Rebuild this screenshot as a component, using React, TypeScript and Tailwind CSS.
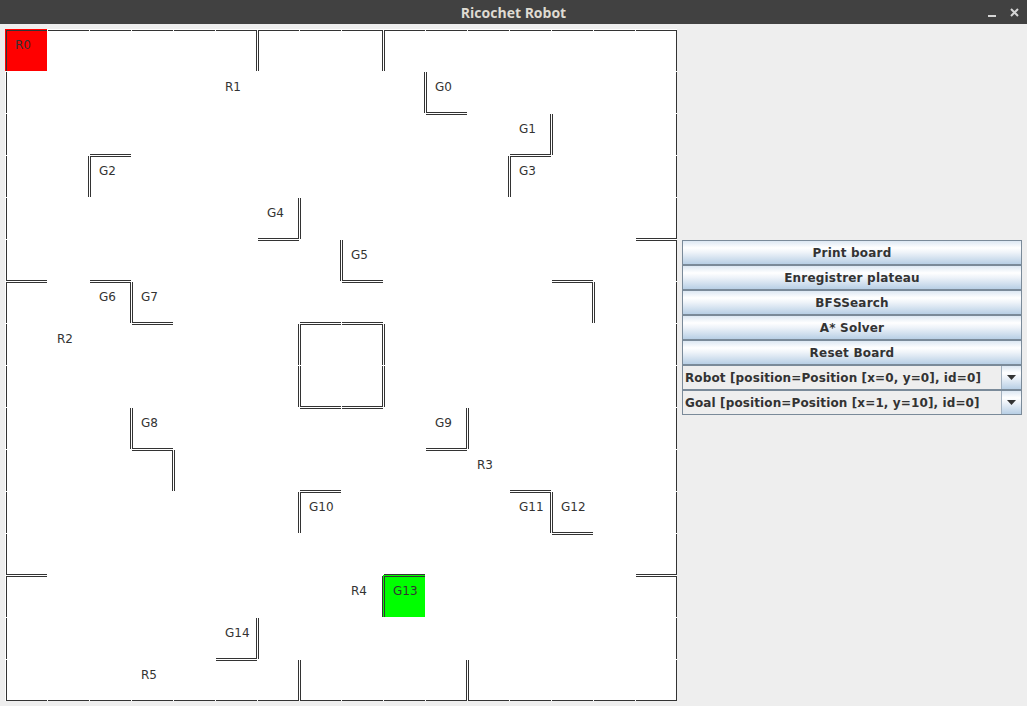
import React from "react";

type Side = "N" | "S" | "E" | "W";

const SIZE = 16;

// one entry per wall; the neighbouring cell gets the opposite side too
const WALLS: [number, number, Side][] = [
  [5, 0, "E"],
  [8, 0, "E"],
  [10, 1, "W"],
  [10, 1, "S"],
  [12, 2, "E"],
  [12, 2, "S"],
  [12, 3, "W"],
  [2, 3, "N"],
  [2, 3, "W"],
  [6, 4, "E"],
  [6, 4, "S"],
  [15, 4, "S"],
  [8, 5, "W"],
  [8, 5, "S"],
  [0, 5, "S"],
  [2, 6, "N"],
  [2, 6, "E"],
  [3, 6, "S"],
  [13, 6, "N"],
  [13, 6, "E"],
  [7, 7, "N"],
  [7, 7, "W"],
  [8, 7, "N"],
  [8, 7, "E"],
  [7, 8, "W"],
  [7, 8, "S"],
  [8, 8, "E"],
  [8, 8, "S"],
  [3, 9, "W"],
  [3, 9, "S"],
  [3, 10, "E"],
  [10, 9, "E"],
  [10, 9, "S"],
  [7, 11, "N"],
  [7, 11, "W"],
  [12, 11, "N"],
  [12, 11, "E"],
  [13, 11, "S"],
  [0, 12, "S"],
  [15, 12, "S"],
  [9, 13, "N"],
  [9, 13, "W"],
  [5, 14, "E"],
  [5, 14, "S"],
  [6, 15, "E"],
  [10, 15, "E"],
];

const LABELS: [number, number, string][] = [
  [0, 0, "R0"],
  [5, 1, "R1"],
  [10, 1, "G0"],
  [12, 2, "G1"],
  [2, 3, "G2"],
  [12, 3, "G3"],
  [6, 4, "G4"],
  [8, 5, "G5"],
  [2, 6, "G6"],
  [3, 6, "G7"],
  [1, 7, "R2"],
  [3, 9, "G8"],
  [10, 9, "G9"],
  [11, 10, "R3"],
  [7, 11, "G10"],
  [12, 11, "G11"],
  [13, 11, "G12"],
  [8, 13, "R4"],
  [9, 13, "G13"],
  [5, 14, "G14"],
  [3, 15, "R5"],
];

const FILLS: Record<string, string> = {
  "0,0": "bg-[#ff0000]",
  "9,13": "bg-[#00ff00]",
};

const opposite: Record<Side, [number, number, Side]> = {
  N: [0, -1, "S"],
  S: [0, 1, "N"],
  E: [1, 0, "W"],
  W: [-1, 0, "E"],
};

function buildWalls() {
  const map: Record<string, Set<Side>> = {};
  const add = (c: number, r: number, s: Side) => {
    if (c < 0 || r < 0 || c >= SIZE || r >= SIZE) return;
    const k = `${c},${r}`;
    if (!map[k]) map[k] = new Set();
    map[k].add(s);
  };
  for (let i = 0; i < SIZE; i++) {
    add(i, 0, "N");
    add(i, SIZE - 1, "S");
    add(0, i, "W");
    add(SIZE - 1, i, "E");
  }
  for (const [c, r, s] of WALLS) {
    add(c, r, s);
    const [dc, dr, o] = opposite[s];
    add(c + dc, r + dr, o);
  }
  return map;
}

const wallMap = buildWalls();
const labelMap: Record<string, string> = {};
for (const [c, r, t] of LABELS) labelMap[`${c},${r}`] = t;

function Cell({ c, r }: { c: number; r: number }) {
  const k = `${c},${r}`;
  const sides = wallMap[k] ?? new Set<Side>();
  const label = labelMap[k];
  return (
    <div className={`relative w-[42px] h-[42px] ${FILLS[k] ?? ""}`}>
      {label && (
        <span className="absolute left-[10px] top-[9px] text-[12px] leading-[14px] text-[#333333]">
          {label}
        </span>
      )}
      <div
        className={[
          "absolute left-px top-px w-[41px] h-[41px] border-[#333333]",
          sides.has("N") ? "border-t" : "",
          sides.has("S") ? "border-b" : "",
          sides.has("W") ? "border-l" : "",
          sides.has("E") ? "border-r" : "",
        ].join(" ")}
      />
    </div>
  );
}

function Board() {
  const cells = [];
  for (let r = 0; r < SIZE; r++) {
    for (let c = 0; c < SIZE; c++) {
      cells.push(<Cell key={`${c}-${r}`} c={c} r={r} />);
    }
  }
  return (
    <div className="grid grid-cols-[repeat(16,42px)] bg-white shrink-0">
      {cells}
    </div>
  );
}

const buttonBg =
  "bg-[linear-gradient(to_bottom,#dde8f3_0%,#ffffff_30%,#eef3f9_50%,#b8cfe5_100%)]";

function Button({ children }: { children: React.ReactNode }) {
  return (
    <div
      className={`h-[25px] border border-[#7a8a99] ${buttonBg} flex items-center justify-center font-bold text-[12px] tracking-[0.2px] text-[#333333]`}
    >
      {children}
    </div>
  );
}

function Combo({ value }: { value: string }) {
  return (
    <div className="h-[25px] border border-[#7a8a99] flex bg-[#eeeeee]">
      <div className="flex-1 flex items-center pl-[2px] font-bold text-[12px] tracking-[0.12px] text-[#333333] whitespace-nowrap overflow-hidden">
        {value}
      </div>
      <div
        className={`w-[20px] border-l border-[#a3b1bf] ${buttonBg} flex items-center justify-center`}
      >
        <svg width="9" height="5" viewBox="0 0 9 5">
          <path d="M0 0H9L4.5 5Z" fill="#333333" />
        </svg>
      </div>
    </div>
  );
}

export default function App() {
  return (
    <div
      className="w-[1027px] h-[706px] bg-[#eeeeee] flex flex-col overflow-hidden"
      style={{ fontFamily: '"DejaVu Sans", sans-serif' }}
    >
      <div className="h-[24px] bg-[#414141] flex items-center relative shrink-0">
        <div
          className="flex-1 text-center text-[14px] font-bold text-[#dfdbd2]"
          style={{ fontFamily: '"Open Sans", sans-serif' }}
        >
          Ricochet Robot
        </div>
        <div className="absolute right-[8px] top-0 h-[24px] flex items-center gap-[13px]">
          <svg width="9" height="9" viewBox="0 0 9 9">
            <rect x="0" y="7" width="8" height="2" fill="#d6d6d6" />
          </svg>
          <svg width="9" height="9" viewBox="0 0 9 9">
            <path d="M1 1L8 8M8 1L1 8" stroke="#d6d6d6" strokeWidth="2" />
          </svg>
        </div>
      </div>
      <div className="flex pl-[5px] pt-[5px] gap-[5px]">
        <Board />
        <div className="w-[340px] mt-[211px] flex flex-col">
          <Button>Print board</Button>
          <Button>Enregistrer plateau</Button>
          <Button>BFSSearch</Button>
          <Button>A* Solver</Button>
          <Button>Reset Board</Button>
          <Combo value="Robot [position=Position [x=0, y=0], id=0]" />
          <Combo value="Goal [position=Position [x=1, y=10], id=0]" />
        </div>
      </div>
    </div>
  );
}
